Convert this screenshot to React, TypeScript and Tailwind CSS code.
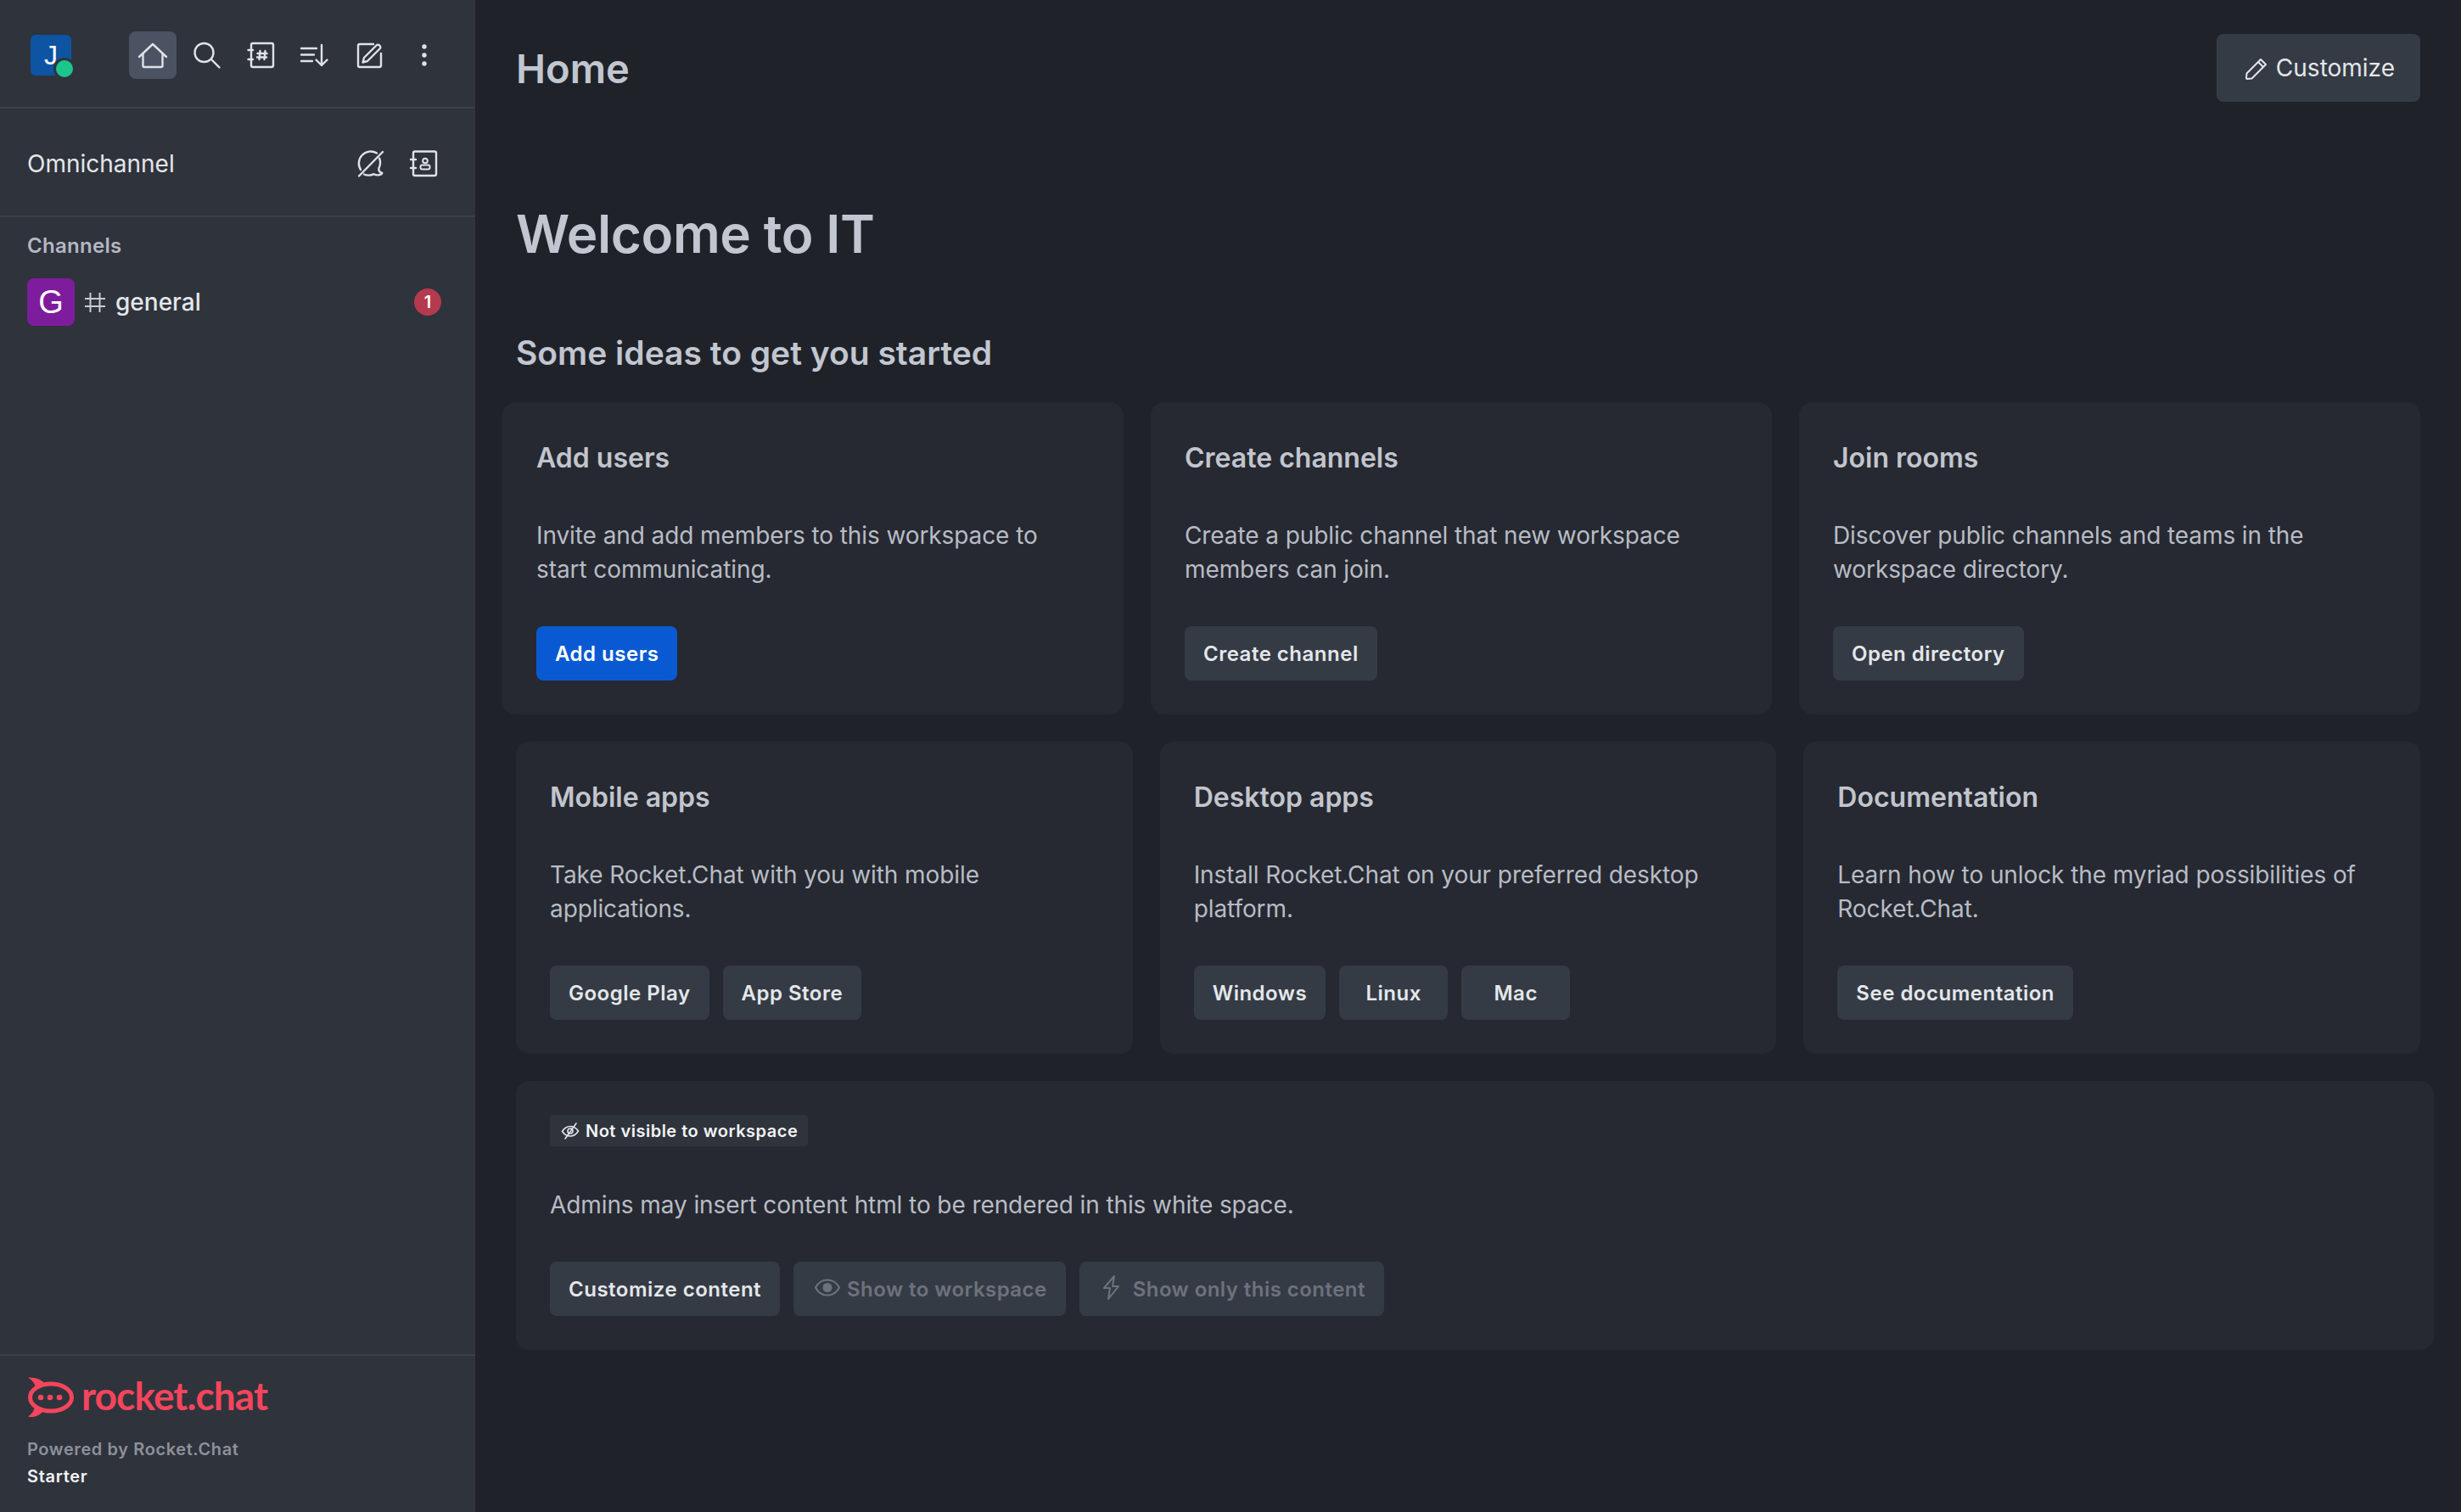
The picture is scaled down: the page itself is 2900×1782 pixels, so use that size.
const ICON = "w-10 h-10 shrink-0 fill-none stroke-[#dfe2e6] stroke-[2.4] [stroke-linecap:round] [stroke-linejoin:round]";

const HomeIcon = () => (
  <svg viewBox="0 0 40 40" className={ICON}>
    <path d="M4 22L20 7l16 15" />
    <path d="M8.5 19v13.5A1.5 1.5 0 0 0 10 34h20a1.5 1.5 0 0 0 1.5-1.5V19" />
  </svg>
);

const SearchIcon = () => (
  <svg viewBox="0 0 40 40" className={ICON}>
    <circle cx="16.5" cy="17" r="11" />
    <path d="M25 25l9.5 9.5" />
  </svg>
);

const DirectoryIcon = () => (
  <svg viewBox="0 0 40 40" className={ICON}>
    <rect x="8" y="6" width="26" height="28" rx="2" />
    <path d="M4.5 14H10M4.5 25H10" />
    <path d="M18.5 15l-1 10M24.5 15l-1 10M15.5 18h11M15 22.5h11" strokeWidth="2.4" />
  </svg>
);

const SortIcon = () => (
  <svg viewBox="0 0 40 40" className={ICON}>
    <path d="M3 12h18M3 19.5h15M3 27h13" />
    <path d="M27 8v24M20.5 25.5L27 32l6.5-6.5" />
  </svg>
);

const EditIcon = () => (
  <svg viewBox="0 0 40 40" className={ICON}>
    <path d="M24 7H8a2 2 0 0 0-2 2v23a2 2 0 0 0 2 2h23a2 2 0 0 0 2-2V18" />
    <path d="M13 23L27.5 8.5a2.6 2.6 0 0 1 3.7 0l.3.3a2.6 2.6 0 0 1 0 3.7L17 27l-5.5 1.5z" />
  </svg>
);

const KebabIcon = () => (
  <svg viewBox="0 0 40 40" className="w-10 h-10 shrink-0 fill-[#dfe2e6]">
    <circle cx="20" cy="10" r="2.7" />
    <circle cx="20" cy="20" r="2.7" />
    <circle cx="20" cy="30" r="2.7" />
  </svg>
);

const ChatOffIcon = () => (
  <svg viewBox="0 0 40 40" className={ICON}>
    <path d="M7 34.500L35 6" />
    <path d="M9 27A14 14 0 0 1 28 7.500" />
    <path d="M31 13.500A13.500 13.500 0 0 1 30.500 25c-.8 3 1 5 3.800 5.800-1 2.700-6.300 3.400-9.600 1.400A14.500 14.500 0 0 1 13 32.500" />
  </svg>
);

const ContactIcon = () => (
  <svg viewBox="0 0 40 40" className={ICON}>
    <rect x="8" y="5.500" width="27" height="28.500" rx="2" />
    <path d="M5 15h6M5 25h6" />
    <circle cx="22" cy="16.500" r="2.800" strokeWidth="2" />
    <rect x="16.500" y="21.500" width="11" height="5" rx="2" strokeWidth="2" />
  </svg>
);

const HashIcon = () => (
  <svg viewBox="0 0 40 40" className="w-10 h-10 shrink-0 fill-none stroke-[#c9ccd3] stroke-2">
    <path d="M8 16h24M8 25h24M14.500 9v23M25.500 9v23" />
  </svg>
);

const PencilIcon = () => (
  <svg viewBox="0 0 32 32" className="w-8 h-8 shrink-0 fill-none stroke-[#e4e7ea] stroke-2 [stroke-linejoin:round]">
    <path d="M4.500 22.500L21 6l6 6-16.500 16.500-5.500.5a1 1 0 0 1-1-1z" />
    <path d="M18 9l6 6" />
  </svg>
);

const EyeOffIcon = () => (
  <svg viewBox="0 0 24 24" className="w-6 h-6 shrink-0 fill-none stroke-[#e4e7ea] stroke-[1.6] [stroke-linecap:round]">
    <path d="M2.500 12.500C5 8.500 8.500 6.500 12 6.500s7 2 9.500 5.500C19 16 15.500 18 12 18s-7-2-9.500-5.500z" />
    <circle cx="12" cy="12" r="3" />
    <path d="M6 21L19 3" />
  </svg>
);

const EyeIcon = () => (
  <svg viewBox="0 0 32 32" className="-mt-1 w-8 h-8 shrink-0 fill-none stroke-[#6d727c] stroke-2">
    <path d="M2 15.500C5 10 10 6.500 16 6.500s11 3.500 14 9C27 21 22 24.500 16 24.500S5 21 2 15.500z" />
    <circle cx="16" cy="15.500" r="4.500" fill="#6d727c" />
  </svg>
);

const BoltIcon = () => (
  <svg viewBox="0 0 32 32" className="-mt-1 w-8 h-8 shrink-0 fill-none stroke-[#6d727c] stroke-2 [stroke-linejoin:round]">
    <path d="M17 2L5 16h7l-2 13 12-15h-7z" />
  </svg>
);

const RocketMark = () => (
  <svg viewBox="0 0 56 50" className="w-14 h-[50px] shrink-0">
    <ellipse cx="28" cy="25" rx="24.500" ry="16" fill="none" stroke="#f5455c" strokeWidth="5" />
    <path d="M1 1.500C10 1 18 4 21 9L10 15C10 9 6 5 1 1.500z" fill="#f5455c" />
    <path d="M1 47.500C6 44 9 40 9 34l10 7C15 46 8 49.500 1 47.500z" fill="#f5455c" />
    <circle cx="16" cy="25" r="3.300" fill="#f5455c" />
    <circle cx="27" cy="25" r="3.300" fill="#f5455c" />
    <circle cx="38" cy="25" r="3.300" fill="#f5455c" />
  </svg>
);

const navButtons = [SearchIcon, DirectoryIcon, SortIcon, EditIcon, KebabIcon];

const Sidebar = () => {
  return (
    <aside className="w-[560px] shrink-0 bg-[#2f333c] flex flex-col">
      <div className="h-[128px] pt-1 border-b-2 border-[#3b4049] flex items-center">
        <div className="relative ml-9 w-12 h-12 rounded-md bg-[#0d54a3] flex items-center justify-center text-white text-[32px] font-['Liberation_Sans',sans-serif]">
          J
          <span className="absolute left-[27px] top-[27px] w-[26px] h-[26px] rounded-full bg-[#1bc68d] border-[3px] border-[#2f333c]"></span>
        </div>
        <div className="ml-[68px] flex gap-2">
          <div className="w-14 h-14 rounded-lg bg-[#4b5262] flex items-center justify-center">
            <HomeIcon />
          </div>
          {navButtons.map((Icon, i) => (
            <div key={i} className="w-14 h-14 flex items-center justify-center">
              <Icon />
            </div>
          ))}
        </div>
      </div>

      <div className="h-[128px] pt-1 border-b-2 border-[#3b4049] flex items-center pl-8 pr-[41px]">
        <span className="flex-1 text-[28px] text-[#e4e7ea]">Omnichannel</span>
        <div className="flex gap-[23px]">
          <ChatOffIcon />
          <ContactIcon />
        </div>
      </div>

      <div className="mt-4 pl-8 h-9 flex items-center text-[24px] font-semibold tracking-[0.3px] text-[#b4b8c1]">Channels</div>
      <div className="mt-5 pl-8 pr-10 flex items-center">
        <div className="w-14 h-14 rounded-lg bg-[#7e1c9e] flex items-center justify-center text-white text-[38px] font-['Liberation_Sans',sans-serif]">
          G
        </div>
        <div className="ml-1"><HashIcon /></div>
        <span className="ml-1 flex-1 text-[28px] font-medium text-[#e4e7ea]">general</span>
        <span className="w-8 h-8 rounded-full bg-[#b53a4e] flex items-center justify-center text-white text-[20px] font-semibold">1</span>
      </div>

      <div className="mt-auto h-[186px] border-t-2 border-[#3b4049] pl-8 pt-6">
        <div className="flex items-center gap-2">
          <RocketMark />
          <span className="-mt-1 text-[46px] leading-[50px] font-bold text-[#f5455c] font-['Lato',sans-serif] tracking-[-0.9px]">rocket.chat</span>
        </div>
        <div className="mt-5 text-[20px] leading-8 font-semibold text-[#8d919b] tracking-[0.6px]">Powered by Rocket.Chat</div>
        <div className="text-[20px] leading-8 font-semibold text-[#f2f3f5] tracking-[0.7px]">Starter</div>
      </div>
    </aside>
  );
};

const Btn = ({ label, primary }: { label: string; primary?: boolean }) => (
  <button className={`h-16 min-w-[128px] pt-[2px] px-[22px] rounded-lg text-[24px] font-semibold tracking-[0.5px] ${primary ? "bg-[#095ad2] text-white" : "bg-[#353b45] text-[#e4e7ea]"}`}>
    {label}
  </button>
);

const Card = ({ title, text, buttons }: { title: string; text: string; buttons: { label: string; primary?: boolean }[] }) => (
  <div className="flex-1 basis-0 rounded-2xl bg-[#262931] p-10">
    <h3 className="pt-[2px] text-[32px] leading-[48px] font-semibold text-[#c2c5cd]">{title}</h3>
    <p className="mt-[47px] text-[28px] leading-10 tracking-[-0.09px] text-[#b8bcc5]">{text}</p>
    <div className="mt-[47px] flex gap-4">
      {buttons.map((b) => (
        <Btn key={b.label} label={b.label} primary={b.primary} />
      ))}
    </div>
  </div>
);

export default function App() {
  return (
    <div className="flex min-h-screen w-full bg-[#1f2329] font-['Inter',sans-serif]">
      <Sidebar />
      <main className="flex-1 min-w-0 pl-12 pr-12">
        <header className="h-[160px] flex items-center justify-between">
          <h1 className="pt-[3px] text-[47px] font-semibold text-[#c2c6d0]">Home</h1>
          <button className="h-20 pl-[31px] pr-[30px] rounded-lg bg-[#353b45] flex items-center gap-[7px] text-[28px] text-[#e4e7ea]">
            <PencilIcon />
            Customize
          </button>
        </header>

        <h2 className="mt-[76px] text-[62px] leading-[80px] font-semibold tracking-[-0.4px] text-[#c2c6d0]">Welcome to IT</h2>
        <h3 className="mt-[72px] text-[39px] leading-[56px] font-semibold text-[#c2c6d0]">Some ideas to get you started</h3>

        <div className="mt-[30px] -ml-4 flex gap-8">
          <Card title="Add users" text="Invite and add members to this workspace to start communicating." buttons={[{ label: "Add users", primary: true }]} />
          <Card title="Create channels" text="Create a public channel that new workspace members can join." buttons={[{ label: "Create channel" }]} />
          <Card title="Join rooms" text="Discover public channels and teams in the workspace directory." buttons={[{ label: "Open directory" }]} />
        </div>

        <div className="mt-8 flex gap-8">
          <Card title="Mobile apps" text="Take Rocket.Chat with you with mobile applications." buttons={[{ label: "Google Play" }, { label: "App Store" }]} />
          <Card title="Desktop apps" text="Install Rocket.Chat on your preferred desktop platform." buttons={[{ label: "Windows" }, { label: "Linux" }, { label: "Mac" }]} />
          <Card title="Documentation" text="Learn how to unlock the myriad possibilities of Rocket.Chat." buttons={[{ label: "See documentation" }]} />
        </div>

        <div className="mt-8 -mr-4 rounded-2xl bg-[#262931] p-10">
          <div className="inline-flex items-center gap-[6px] h-[37px] px-3 rounded bg-[#2f333c] text-[20px] font-semibold tracking-[0.5px] text-[#f2f3f5]">
            <EyeOffIcon />
            Not visible to workspace
          </div>
          <p className="mt-[49px] text-[28px] leading-10 tracking-[-0.09px] text-[#b8bcc5]">Admins may insert content html to be rendered in this white space.</p>
          <div className="mt-[47px] flex gap-4">
            <Btn label="Customize content" />
            <button className="h-16 pt-[2px] pl-6 pr-[22px] rounded-lg bg-[#353b45] flex items-center gap-[7px] text-[24px] font-semibold tracking-[0.45px] text-[#6d727c]">
              <EyeIcon />
              Show to workspace
            </button>
            <button className="h-16 pt-[2px] pl-6 pr-[22px] rounded-lg bg-[#353b45] flex items-center gap-[7px] text-[24px] font-semibold tracking-[0.45px] text-[#6d727c]">
              <BoltIcon />
              Show only this content
            </button>
          </div>
        </div>
      </main>
    </div>
  );
}
